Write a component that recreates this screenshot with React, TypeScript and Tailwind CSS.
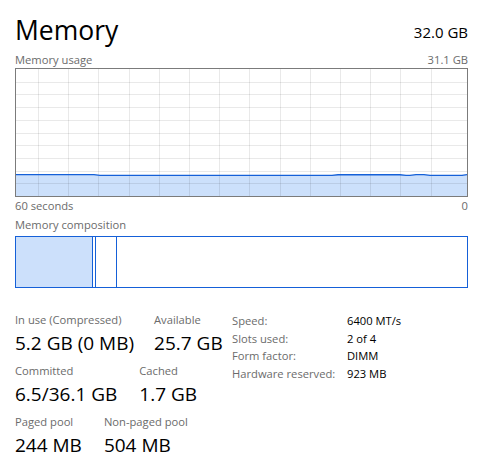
import React from "react";

const FONT = { fontFamily: '"Open Sans", "Noto Sans", sans-serif' };

const vLines = Array.from({ length: 14 }, (_, i) => 22 + i * 30.2);
const hLines = Array.from({ length: 9 }, (_, i) => 12.7 * (i + 1));

// Memory usage over the last 60 seconds, as y positions in the chart's 451x127 box
const wavePts: [number, number][] = [
  [0, 105.6], [78, 105.6], [84, 106.4], [316, 106.4], [322, 105.8], [384, 105.8],
  [390, 106.4], [394, 106.4], [400, 105.6], [408, 105.6], [414, 106.4], [446, 106.4], [451, 105.6],
];
const linePath = wavePts.map(([x, y], i) => `${i ? "L" : "M"}${x} ${y}`).join(" ");
const fillPath = `${linePath} L451 127 L0 127 Z`;

function UsageChart() {
  return (
    <div className="h-[129px] w-full border border-[#7b7b7b] bg-white">
      <svg width="451" height="127" viewBox="0 0 451 127" className="block">
        <path d={fillPath} fill="#cce0fb" />
        {vLines.map((x) => (
          <line key={`v${x}`} x1={Math.round(x) + 0.5} y1={0} x2={Math.round(x) + 0.5} y2={127} stroke="rgba(0,0,0,0.085)" strokeWidth={1} />
        ))}
        {hLines.map((y) => (
          <line key={`h${y}`} x1={0} y1={Math.round(y) + 0.5} x2={451} y2={Math.round(y) + 0.5} stroke="rgba(0,0,0,0.085)" strokeWidth={1} />
        ))}
        <path d={linePath} fill="none" stroke="#1560d8" strokeWidth={1.4} />
      </svg>
    </div>
  );
}

function CompositionBar() {
  return (
    <div className="flex h-[52px] w-full border border-[#1560d8]">
      <div className="w-[77px] border-r border-[#1560d8] bg-[#cce0fb]" />
      <div className="w-[3px] border-r border-[#1560d8]" />
      <div className="w-[21px] border-r border-[#1560d8]" />
      <div className="flex-1" />
    </div>
  );
}

function Stat({ label, value }: { label: string; value: string }) {
  return (
    <div className="flex flex-col">
      <span className="text-[11.2px] leading-[16px] text-[#6b6b6b]">{label}</span>
      <span className="mt-[2px] text-[19px] leading-[26px] text-black">{value}</span>
    </div>
  );
}

const specs: [string, string][] = [
  ["Speed:", "6400 MT/s"],
  ["Slots used:", "2 of 4"],
  ["Form factor:", "DIMM"],
  ["Hardware reserved:", "923 MB"],
];

export default function App() {
  return (
    <div className="h-[467px] w-[483px] bg-white px-[15px] text-black" style={FONT}>
      <div className="flex items-end justify-between pt-[12px]">
        <span className="text-[26.5px] leading-[36px]">Memory</span>
        <span className="pb-[5px] text-[15px] leading-[22px]">32.0 GB</span>
      </div>
      <div className="mt-[4px] flex justify-between text-[11.2px] leading-[16px] text-[#6b6b6b]">
        <span>Memory usage</span>
        <span>31.1 GB</span>
      </div>
      <UsageChart />
      <div className="mt-[1px] flex justify-between text-[11.2px] leading-[16px] text-[#6b6b6b]">
        <span>60 seconds</span>
        <span>0</span>
      </div>
      <div className="mt-[3px] text-[11.2px] leading-[16px] text-[#6b6b6b]">Memory composition</div>
      <div className="mt-[3px]">
        <CompositionBar />
      </div>
      <div className="mt-[24px] flex items-start">
        <div className="flex w-[217px] flex-col gap-[7px]">
          <div className="flex gap-[20px]">
            <Stat label="In use (Compressed)" value="5.2 GB (0 MB)" />
            <Stat label="Available" value="25.7 GB" />
          </div>
          <div className="flex gap-[22px]">
            <Stat label="Committed" value="6.5/36.1 GB" />
            <Stat label="Cached" value="1.7 GB" />
          </div>
          <div className="flex gap-[22px]">
            <Stat label="Paged pool" value="244 MB" />
            <Stat label="Non-paged pool" value="504 MB" />
          </div>
        </div>
        <div className="grid grid-cols-[115px_auto] content-start text-[11.2px] leading-[17.7px]">
          {specs.map(([k, v]) => (
            <React.Fragment key={k}>
              <span className="text-[#6b6b6b]">{k}</span>
              <span className="text-black">{v}</span>
            </React.Fragment>
          ))}
        </div>
      </div>
    </div>
  );
}
